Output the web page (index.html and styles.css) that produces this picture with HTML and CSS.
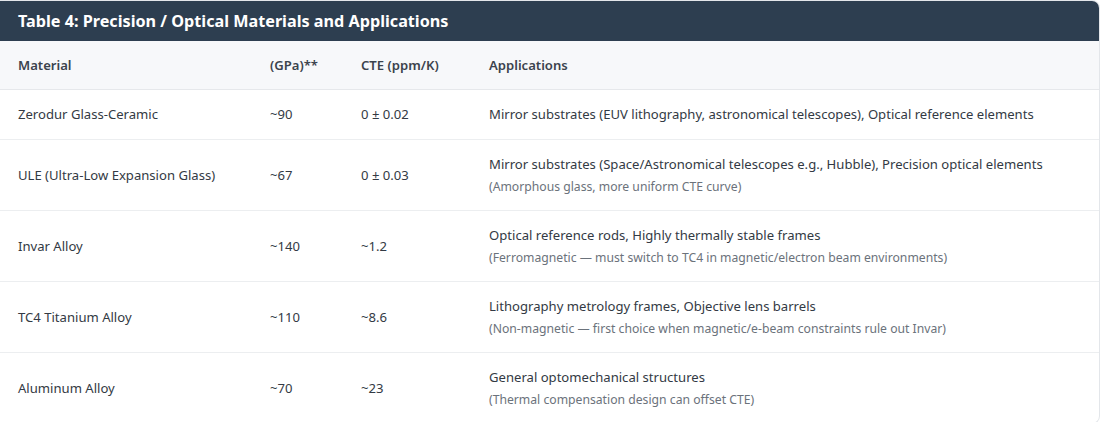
FILE: index.html
```html
<!DOCTYPE html>
<html lang="en">
<head>
<meta charset="utf-8">
<title>Table 4</title>
<link rel="stylesheet" href="styles.css">
</head>
<body>
<div class="card">
  <div class="title">Table 4: Precision / Optical Materials and Applications</div>
  <table class="tbl">
    <colgroup>
      <col class="c1"><col class="c2"><col class="c3"><col class="c4">
    </colgroup>
    <thead>
      <tr><th>Material</th><th>(GPa)**</th><th>CTE (ppm/K)</th><th>Applications</th></tr>
    </thead>
    <tbody>
      <tr><td>Zerodur Glass-Ceramic</td><td>~90</td><td>0 ± 0.02</td><td>Mirror substrates (EUV lithography, astronomical telescopes), Optical reference elements</td></tr>
      <tr><td>ULE (Ultra-Low Expansion Glass)</td><td>~67</td><td>0 ± 0.03</td><td>Mirror substrates (Space/Astronomical telescopes e.g., Hubble), Precision optical elements<div class="note">(Amorphous glass, more uniform CTE curve)</div></td></tr>
      <tr><td>Invar Alloy</td><td>~140</td><td>~1.2</td><td>Optical reference rods, Highly thermally stable frames<div class="note">(Ferromagnetic — must switch to TC4 in magnetic/electron beam environments)</div></td></tr>
      <tr><td>TC4 Titanium Alloy</td><td>~110</td><td>~8.6</td><td>Lithography metrology frames, Objective lens barrels<div class="note">(Non-magnetic — first choice when magnetic/e-beam constraints rule out Invar)</div></td></tr>
      <tr><td>Aluminum Alloy</td><td>~70</td><td>~23</td><td>General optomechanical structures<div class="note">(Thermal compensation design can offset CTE)</div></td></tr>
    </tbody>
  </table>
</div>
</body>
</html>
```
FILE: styles.css
```css
html, body { margin: 0; padding: 0; background: #ffffff; }
body { font-family: "Noto Sans", "Open Sans", sans-serif; color: #333a44; }
.card {
  width: 1100px;
  box-sizing: border-box;
  border: 1px solid #e3e6ea;
  border-left: none;
  border-radius: 0 8px 8px 0;
  overflow: hidden;
}
.title {
  background: #2d3e50;
  color: #ffffff;
  font-weight: 700;
  font-size: 16.2px;
  height: 40px;
  line-height: 40px;
  padding: 0 18px;
}
.tbl { width: 100%; border-collapse: collapse; table-layout: fixed; font-size: 13.1px; }
.c1 { width: 252px; }
.c2 { width: 91px; }
.c3 { width: 128px; }
.tbl th {
  background: #f7f8fa;
  text-align: left;
  font-weight: 600;
  color: #3b434d;
  height: 48px;
  padding: 0 18px;
  border-bottom: 1px solid #e6e8eb;
}
.tbl td {
  padding: 14px 18px;
  line-height: 21px;
  border-bottom: 1px solid #eceef0;
  vertical-align: middle;
}
.tbl tbody tr:last-child td { border-bottom: none; }
.note { font-size: 12.2px; color: #6b727b; line-height: 18px; margin-top: 3px; }
```
